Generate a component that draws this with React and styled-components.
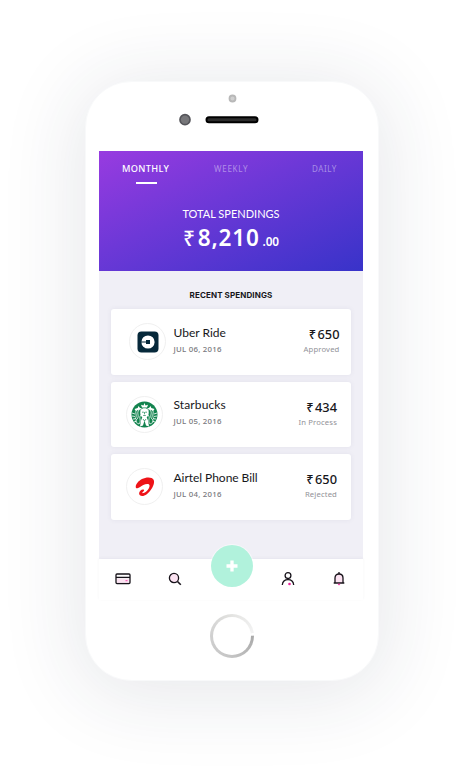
import React from "react";
import styled, { createGlobalStyle } from "styled-components";

const GlobalStyle = createGlobalStyle`
  * { box-sizing: border-box; }
  body { margin: 0; background: #fff; overflow: hidden; font-family: "Lato", "Noto Sans", sans-serif; color: #17171b; }
  svg { display: block; }
`;

const Page = styled.main`
  width: 464px;
  height: 770px;
  padding: 81px 0 0 85px;
  overflow: hidden;
`;

const Phone = styled.div`
  width: 294px;
  height: 600px;
  border-radius: 46px;
  background: #fff;
  border: 1px solid #f8f9fa;
  box-shadow: 0 8px 80px 8px rgba(35, 48, 72, 0.11);
  display: flex;
  flex-direction: column;
  align-items: center;
`;

const Earpiece = styled.div`
  height: 69px;
  flex: none;
`;

const Screen = styled.section`
  width: 264px;
  height: 449px;
  margin-right: 2px;
  flex: none;
  display: flex;
  flex-direction: column;
  background: #f0eff6;
`;

const Hero = styled.header`
  height: 120px;
  flex: none;
  background: linear-gradient(156deg, #983be0 0%, #6d38d7 43%, #3833c9 100%);
  color: #fff;
  display: flex;
  flex-direction: column;
  align-items: center;
`;

const Tabs = styled.nav`
  width: 100%;
  height: 33px;
  padding: 11px 0 0 23px;
  display: grid;
  grid-template-columns: 92px 98px 1fr;
`;

const Tab = styled.div`
  font-family: "Noto Sans", sans-serif;
  font-size: ${(p) => (p.$active ? 9.2 : 8)}px;
  font-weight: ${(p) => (p.$active ? 500 : 400)};
  letter-spacing: ${(p) => p.$spacing}px;
  line-height: 14px;
  white-space: nowrap;
  color: ${(p) => (p.$active ? "#fff" : "rgba(255,255,255,.43)")};
  &::after {
    content: "";
    display: ${(p) => (p.$active ? "block" : "none")};
    width: 21px;
    height: 2px;
    margin: 6px auto 0 14px;
    background: #fff;
  }
`;

const TotalLabel = styled.div`
  margin-top: 23px;
  line-height: 14px;
  font-size: 11px;
`;

const Total = styled.div`
  margin-top: 2px;
  height: 30px;
  display: flex;
  align-items: baseline;
  font-family: "Noto Sans", sans-serif;
  font-weight: 600;
  font-size: 22.5px;
  line-height: 30px;
  letter-spacing: 0.8px;
`;

const TotalRupee = styled.span`
  font-size: 21px;
  font-weight: 500;
  margin-right: 2px;
`;

const Cents = styled.span`
  font-size: 11.8px;
  margin-left: 3px;
  letter-spacing: -0.1px;
`;

const Heading = styled.h2`
  margin: 0;
  height: 38px;
  padding-top: 17px;
  line-height: 14px;
  text-align: center;
  font-family: "Inter", sans-serif;
  font-size: 8px;
  font-weight: 700;
  letter-spacing: 0.12px;
`;

const CardList = styled.div`
  width: 240px;
  margin: 0 auto;
  display: flex;
  flex-direction: column;
  gap: 7px;
`;

const Card = styled.article`
  height: 65.5px;
  background: #fff;
  border-radius: 3px;
  box-shadow: 0 0 5px rgba(65, 60, 110, 0.08);
  display: grid;
  grid-template-columns: 47px 1fr auto;
  column-gap: 15.5px;
  padding-right: ${(p) => p.$inset}px;
`;

const Logo = styled.div`
  width: 37px;
  height: 37px;
  margin: 14px 0 0 ${(p) => p.$left}px;
  border-radius: 50%;
  border: 1px solid #f0f0f0;
  display: grid;
  place-items: center;
`;

const Detail = styled.div`
  padding-top: 14.5px;
`;

const Merchant = styled.div`
  font-family: "Lato", sans-serif;
  font-size: 12px;
  line-height: 17px;
  font-weight: 400;
  letter-spacing: ${(p) => p.$spacing}px;
  white-space: nowrap;
`;

const DateText = styled.div`
  margin-top: 1px;
  font-family: "Noto Sans", sans-serif;
  font-size: 7.8px;
  font-weight: 500;
  line-height: 14px;
  letter-spacing: 0.25px;
  color: #77777c;
`;

const Amount = styled.div`
  padding-top: 16px;
  text-align: right;
  font-family: "Noto Sans", sans-serif;
`;

const Price = styled.div`
  font-size: 12.8px;
  font-weight: 500;
  line-height: 18px;
  white-space: nowrap;
`;

const Rupee = styled.span`
  margin-right: 1.5px;
`;

const Status = styled.div`
  font-size: 7.7px;
  line-height: 12px;
  letter-spacing: 0.14px;
  color: #929298;
`;

const BottomBar = styled.nav`
  margin-top: auto;
  height: 41px;
  flex: none;
  background: #fff;
  box-shadow: 0 -1px 3px rgba(60, 50, 90, 0.05);
  display: grid;
  grid-template-columns: 48px 56px 57px 56px 46px;
  justify-items: center;
`;

const NavItem = styled.div`
  padding-top: 12px;
`;

const AddButton = styled.div`
  width: 42px;
  height: 42px;
  margin-top: -14px;
  border-radius: 50%;
  background: #b1f2dc;
  box-shadow: 0 0 0 1px rgba(255, 255, 255, 0.5);
  display: grid;
  place-items: center;
`;

const HomeButton = styled.div`
  width: 44px;
  height: 44px;
  margin: 14px 0 0;
  border-radius: 50%;
  background: conic-gradient(#e4e4e2 0deg, #f3f3f3 82deg, #fff 83deg, #fff 88deg, #aaa 90deg, #c4c4c4 180deg, #d0d0d0 270deg, #e0e0de 350deg, #e4e4e2 360deg);
  display: grid;
  place-items: center;
  &::before {
    content: "";
    width: 38px;
    height: 38px;
    border-radius: 50%;
    background: #fff;
  }
`;

const UberLogo = () => (
  <svg width="22" height="22" viewBox="0 0 22 22">
    <rect x=".5" y=".5" width="21" height="21" rx="4" fill="#06283a" />
    <circle cx="11" cy="11" r="6.6" fill="#fff" />
    <path d="M4 10.500h5V9h4v4H9v-1.500H4z" fill="#06283a" />
  </svg>
);

const StarbucksLogo = () => (
  <svg width="27" height="27" viewBox="0 0 27 27">
    <circle cx="13.5" cy="13.5" r="13" fill="#12834e" />
    <g fill="none" stroke="#fff" strokeWidth=".8">
      <path d="M8 9C5 12 9 15 6 18s0 4 2 5M6 8c-3 4 1 6-2 10M19 9c3 3-1 6 2 9s0 4-2 5M21 8c3 4-1 6 2 10" />
      <path d="M1 12l3 1M1 15l3 .5M2 18l3-.2M3 21l3-1M26 12l-3 1M26 15l-3 .5M25 18l-3-.2M24 21l-3-1" />
      <path d="M10 14c-3 3 1 5-2 9M17 14c3 3-1 5 2 9" />
    </g>
    <path d="M13.500 2l1 2.400 2.500-.6-1 2.700H11l-1-2.700 2.500.6zM3.500 8l3.200-1 .8-2 1.500 2 2 .2-2 1.500-2 .2-2 1zM23.500 8l-3.200-1-.8-2-1.500 2-2 .2 2 1.500 2 .2 2 1z" fill="#fff" />
    <path d="M9.500 9c2-2.300 6-2.300 8 0 .8 4-.2 6-1.800 7.200l1.300 3.300 1 6-3-1-1.500-5-1.500 5-3 1 1-6 1.300-3.300C9.700 15 8.700 13 9.500 9z" fill="#fff" />
    <path d="M11 11.200h1.800M14.200 11.200H16M13.500 11v2.300M12.200 14.500h2.600M12 18l1.500 2 1.500-2" fill="none" stroke="#12834e" strokeWidth=".7" />
  </svg>
);

const AirtelLogo = () => (
  <svg width="20" height="20" viewBox="0 0 20 20">
    <path d="M.8 10.400C.2 8 3 4 7 2c4-2 10-2.300 11.600.7 1.600 3.200-1.200 10.100-6.800 14.600-3.600 2.800-7.700 2.100-7.700-.7 0-2.500 2.500-4.500 4.300-4.100 1.500.5.300 1.700-.6 2.400-1 1-.5 1.700.8 1.200 3.800-1.500 6.200-5.600 5.900-7.800-.3-1.700-3.700-1.400-6.200-.3-2.500 1.200-4.100 3-5.900 3.300-.8.100-1.300-.3-1.600-.9z" fill="#ee1318" />
  </svg>
);

const items = [
  { name: "Uber Ride", date: "JUL 06, 2016", price: "650", status: "Approved", Icon: UberLogo, left: 18, inset: 11.5, spacing: 0 },
  { name: "Starbucks", date: "JUL 05, 2016", price: "434", status: "In Process", Icon: StarbucksLogo, left: 15, inset: 14, spacing: 0.12 },
  { name: "Airtel Phone Bill", date: "JUL 04, 2016", price: "650", status: "Rejected", Icon: AirtelLogo, left: 15, inset: 14, spacing: -0.04 },
];

const tabs = [
  { label: "MONTHLY", active: true, spacing: 0.35 },
  { label: "WEEKLY", spacing: 0.75 },
  { label: "DAILY", spacing: 0.6 },
];

const CardIcon = () => (
  <svg width="16" height="16" viewBox="0 0 16 16">
    <rect x="1" y="3" width="14" height="9.500" rx="1" fill="#fff" stroke="#17131a" strokeWidth="1.300" />
    <path d="M2 7.800h12v4H2z" fill="#fce3f2" />
    <path d="M1 6.400h14" stroke="#17131a" strokeWidth="1.300" />
    <path d="M10.500 9.700h2" stroke="#ef4aae" />
  </svg>
);

const SearchIcon = () => (
  <svg width="16" height="16" viewBox="0 0 16 16">
    <circle cx="7" cy="7" r="4.600" fill="#fce3f2" stroke="#17131a" strokeWidth="1.300" />
    <path d="M10.500 10.500l3.300 3.300" stroke="#17131a" strokeWidth="1.600" />
  </svg>
);

const UserIcon = () => (
  <svg width="16" height="16" viewBox="0 0 16 16">
    <circle cx="8" cy="4.600" r="2.900" fill="#fff" stroke="#17131a" strokeWidth="1.300" />
    <path d="M2.300 14c.3-3.300 2.300-5.300 5.700-5.300s5.400 2 5.700 5.300" fill="none" stroke="#17131a" strokeWidth="1.300" />
    <circle cx="9.500" cy="13" r="1.300" fill="#ed249b" />
  </svg>
);

const BellIcon = () => (
  <svg width="16" height="16" viewBox="0 0 16 16">
    <path d="M4 12V7c0-2.500 1.600-4 4-4s4 1.500 4 4v5" fill="#fce3f2" stroke="#17131a" strokeWidth="1.300" />
    <path d="M8 1v2M2.700 12h10.600" stroke="#17131a" strokeWidth="1.300" />
    <path d="M6.500 12.700h3L8 14.600z" fill="#ed249b" />
  </svg>
);

export default function App() {
  return (
    <>
      <GlobalStyle />
      <Page>
        <Phone>
          <Earpiece>
            <svg width="294" height="69" viewBox="0 0 294 69">
              <circle cx="147.500" cy="16.500" r="3" fill="#d0d0d0" stroke="#b8b8b8" strokeWidth="1.800" />
              <circle cx="100" cy="37.700" r="5" fill="#77777a" stroke="#55555a" strokeWidth="1.700" />
              <rect x="121.500" y="35.200" width="51" height="5" rx="2.500" fill="#2c2c2c" stroke="#000" strokeWidth="2" />
            </svg>
          </Earpiece>
          <Screen>
            <Hero>
              <Tabs>
                {tabs.map((t) => <Tab key={t.label} $active={t.active} $spacing={t.spacing}>{t.label}</Tab>)}
              </Tabs>
              <TotalLabel>TOTAL SPENDINGS</TotalLabel>
              <Total><TotalRupee>₹</TotalRupee>8,210<Cents>.00</Cents></Total>
            </Hero>
            <Heading>RECENT SPENDINGS</Heading>
            <CardList>
              {items.map(({ Icon, ...item }) => (
                <Card key={item.name} $inset={item.inset}>
                  <Logo $left={item.left}><Icon /></Logo>
                  <Detail>
                    <Merchant $spacing={item.spacing}>{item.name}</Merchant>
                    <DateText>{item.date}</DateText>
                  </Detail>
                  <Amount>
                    <Price><Rupee>₹</Rupee>{item.price}</Price>
                    <Status>{item.status}</Status>
                  </Amount>
                </Card>
              ))}
            </CardList>
            <BottomBar>
              <NavItem><CardIcon /></NavItem>
              <NavItem><SearchIcon /></NavItem>
              <AddButton>
                <svg width="12" height="12" viewBox="0 0 12 12"><path d="M6 .5v11M.5 6h11" stroke="#fff" strokeWidth="3.300" /></svg>
              </AddButton>
              <NavItem><UserIcon /></NavItem>
              <NavItem><BellIcon /></NavItem>
            </BottomBar>
          </Screen>
          <HomeButton />
        </Phone>
      </Page>
    </>
  );
}
